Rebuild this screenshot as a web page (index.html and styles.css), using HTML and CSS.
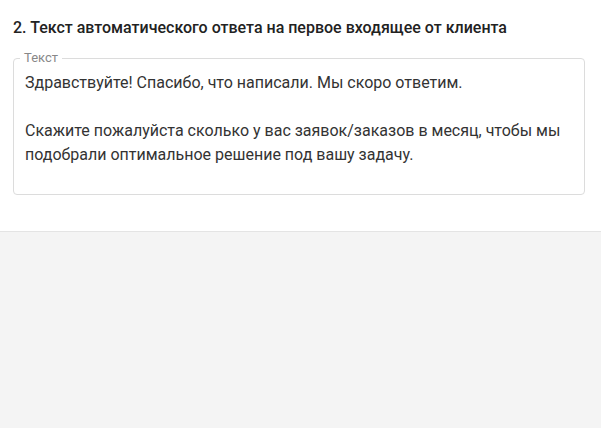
FILE: index.html
```html
<!DOCTYPE html>
<html lang="ru">
<head>
<meta charset="utf-8">
<link rel="stylesheet" href="styles.css">
</head>
<body>
<div class="card">
  <h2 class="title">2. Текст автоматического ответа на первое входящее от клиента</h2>
  <fieldset class="field">
    <legend class="label">Текст</legend>
    <div class="text">
      <p>Здравствуйте! Спасибо, что написали. Мы скоро ответим.</p>
      <p class="empty">&nbsp;</p>
      <p>Скажите пожалуйста сколько у вас заявок/заказов в месяц, чтобы мы подобрали оптимальное решение под вашу задачу.</p>
    </div>
  </fieldset>
</div>
<div class="rest"></div>
</body>
</html>
```
FILE: styles.css
```css
html, body {
  margin: 0;
  padding: 0;
  height: 100%;
}
body {
  font-family: Roboto, "Noto Sans", sans-serif;
  background: #f4f4f4;
  display: flex;
  flex-direction: column;
}
.card {
  background: #fff;
  padding: 18px 16px 36px 13px;
  border-bottom: 1px solid #e4e4e4;
}
.title {
  margin: 0 0 14px 0;
  font-size: 16px;
  font-weight: 500;
  color: #222;
  line-height: 20px;
}
.field {
  margin: 0;
  border: 1px solid #dcdcdc;
  border-radius: 4px;
  padding: 7px 11px 27px 11px;
  min-width: 0;
}
.label {
  font-size: 13px;
  color: #888;
  padding: 0 4px;
  margin-left: -5px;
  line-height: 12px;
}
.text {
  font-size: 16px;
  line-height: 24px;
  color: #333;
}
.text p {
  margin: 0;
}
.rest {
  flex: 1;
}
```
